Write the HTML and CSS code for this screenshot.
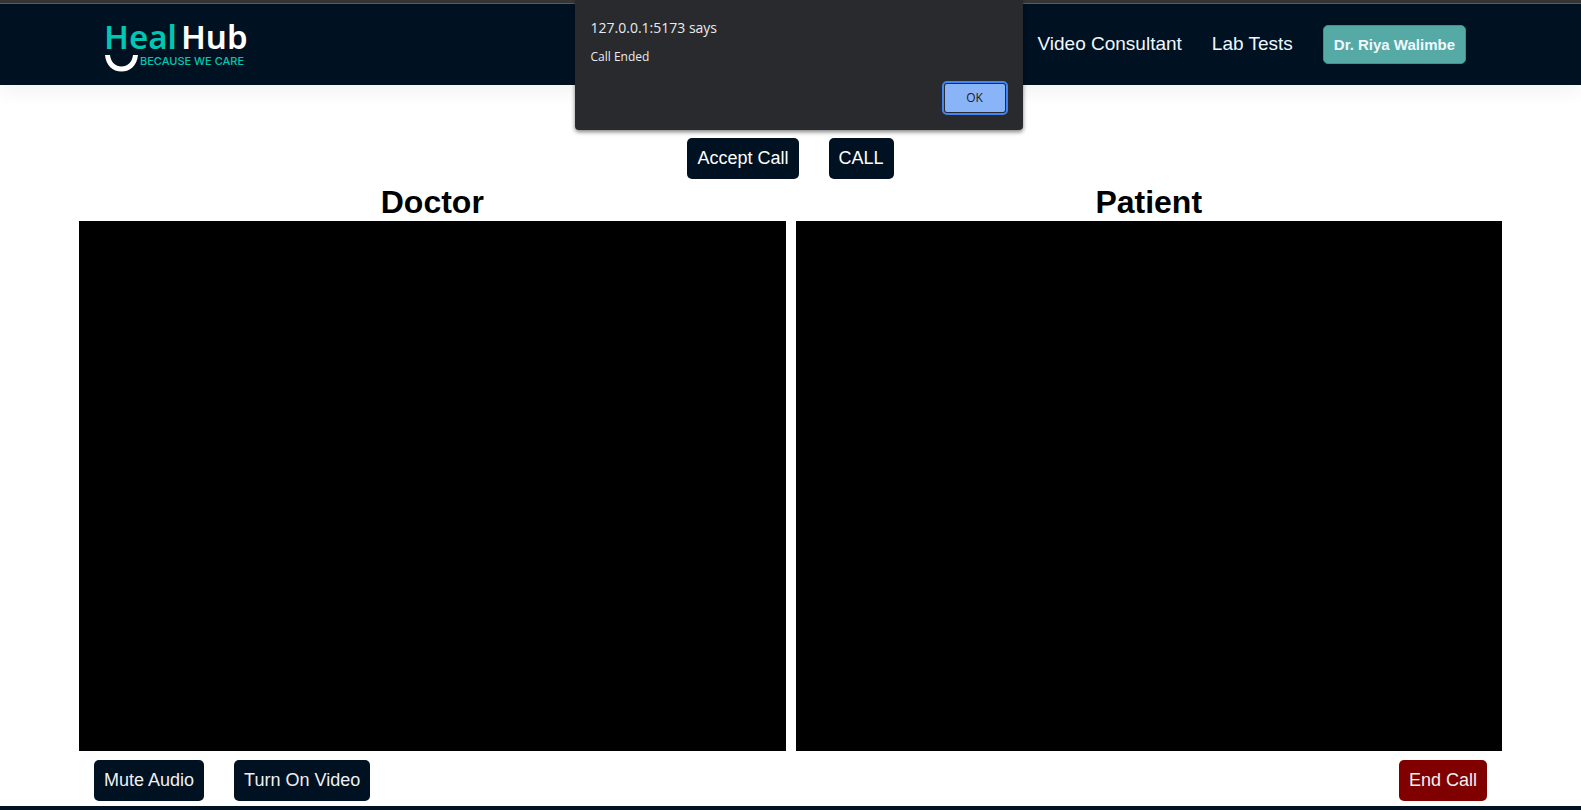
FILE: index.html
```html
<!DOCTYPE html>
<html lang="en">
<head>
<meta charset="utf-8">
<meta name="viewport" content="width=device-width, initial-scale=1">
<title>HealHub</title>
<link rel="stylesheet" href="styles.css">
</head>
<body>
<div class="browser-edge"></div>
<header class="navbar">
  <a class="logo" href="#" aria-label="HealHub, because we care">
    <span class="logo-name"><span class="logo-heal">Heal</span><span class="logo-hub">Hub</span></span>
    <span class="logo-line">
      <svg class="logo-smile" viewBox="0 0 33 17" aria-hidden="true"><path d="M0 0H5C6 7.500 10.500 11.500 16.500 11.500S27 7.500 28 0H33C32 10.500 25.500 16.500 16.500 16.500S1 10.500 0 0Z"/></svg>
      <span class="logo-tagline">BECAUSE WE CARE</span>
    </span>
  </a>
  <nav class="nav-links">
    <a href="#">Video Consultant</a>
    <a href="#">Lab Tests</a>
    <button class="account" type="button">Dr. Riya Walimbe</button>
  </nav>
</header>
<main class="call-page">
  <div class="call-actions">
    <button class="btn" type="button">Accept Call</button>
    <button class="btn" type="button">CALL</button>
  </div>
  <div class="streams">
    <section class="stream">
      <h1>Doctor</h1>
      <div class="video"></div>
    </section>
    <section class="stream">
      <h1>Patient</h1>
      <div class="video"></div>
    </section>
  </div>
  <div class="controls">
    <div class="control-group">
      <button class="btn" type="button">Mute Audio</button>
      <button class="btn" type="button">Turn On Video</button>
    </div>
    <button class="btn btn-end" type="button">End Call</button>
  </div>
</main>
<footer class="footer"></footer>
<div class="alert" role="alertdialog" aria-labelledby="alert-title" aria-describedby="alert-text">
  <h2 id="alert-title">127.0.0.1:5173 says</h2>
  <p id="alert-text">Call Ended</p>
  <button class="alert-ok" type="button">OK</button>
</div>
</body>
</html>
```
FILE: styles.css
```css
* {
  box-sizing: border-box;
  margin: 0;
}

body {
  min-height: 100vh;
  display: flex;
  flex-direction: column;
  background: #fff;
  font-family: "Liberation Sans", Arial, sans-serif;
  overflow: hidden;
}

.browser-edge {
  height: 4px;
  background: #353535;
  border-bottom: 1px solid #5c5c5c;
}

.navbar {
  display: flex;
  justify-content: space-between;
  align-items: center;
  height: 81px;
  padding: 0 115px 0 104px;
  background: #001122;
  box-shadow: 0 10px 15px rgba(20, 0, 20, 0.04);
}

.logo {
  display: flex;
  flex-direction: column;
  padding-top: 1px;
  color: #fff;
  text-decoration: none;
}

.logo-name {
  display: flex;
  gap: 4px;
  font: 600 33px/36px "Noto Sans", sans-serif;
}

.logo-heal,
.logo-tagline {
  color: #00c7b1;
}

.logo-line {
  display: flex;
  gap: 2px;
  padding-left: 1px;
}

.logo-smile {
  width: 33px;
  height: 17px;
  fill: #fff;
}

.logo-tagline {
  font: 500 11px/13px Inter, sans-serif;
}

.nav-links {
  display: flex;
  align-items: center;
  gap: 30px;
}

.nav-links a {
  padding-bottom: 2px;
  color: #f0f8ff;
  font-size: 19px;
  text-decoration: none;
}

.account {
  padding: 10px;
  border: 1px solid #1fa295;
  border-radius: 5px;
  background: #55aaa5;
  color: #f0f8ff;
  font: bold 15px/17px "Liberation Sans", Arial, sans-serif;
}

.call-page {
  padding: 53px 5% 5px;
}

.call-actions,
.control-group {
  display: flex;
  gap: 30px;
}

.call-actions {
  justify-content: center;
}

.btn {
  padding: 10px;
  border: 0;
  border-radius: 5px;
  background: #001122;
  color: #fff;
  font: 18px/21px "Liberation Sans", Arial, sans-serif;
}

.streams {
  display: grid;
  grid-template-columns: 1fr 1fr;
  gap: 10px;
  margin-top: 5px;
}

.stream h1 {
  font-size: 32px;
  line-height: 37px;
  text-align: center;
}

.video {
  aspect-ratio: 4 / 3;
  background: #000;
}

.controls {
  display: flex;
  justify-content: space-between;
  padding: 9px 15px 0;
}

.controls .btn {
  color: #f0f0f0;
}

.controls .btn-end {
  background: #800000;
}

.footer {
  flex: 1 0 4px;
  background: #001122;
}

.alert {
  position: absolute;
  top: 0;
  left: 50%;
  width: 448px;
  margin-left: -216px;
  padding: 18px 16px 16px;
  display: flex;
  flex-direction: column;
  border-radius: 0 0 4px 4px;
  background: #292a2d;
  color: #e8eaed;
  font-family: "Open Sans", sans-serif;
  box-shadow: 0 2px 4px rgba(0, 0, 0, 0.5);
}

.alert h2 {
  font-size: 14px;
  line-height: 20px;
  font-weight: 400;
}

.alert p {
  margin-top: 9px;
  font-size: 12px;
  line-height: 20px;
}

.alert-ok {
  align-self: flex-end;
  width: 64px;
  height: 32px;
  margin-top: 15px;
  padding: 0 0 2px;
  border: 2px solid #292a2d;
  border-radius: 4px;
  outline: 2px solid #4285f4;
  outline-offset: -1px;
  background: #8ab4f8;
  color: #202124;
  font: 12px "Open Sans", sans-serif;
}
```
